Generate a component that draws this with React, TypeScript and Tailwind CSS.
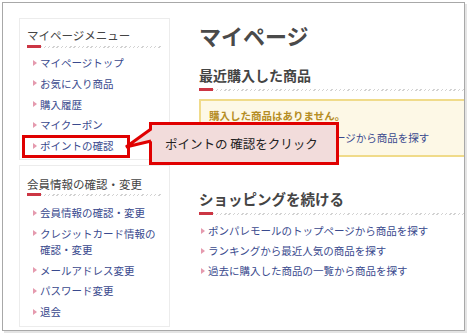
import React from 'react';

const menu1 = ['マイページトップ', 'お気に入り商品', '購入履歴', 'マイクーポン', 'ポイントの確認'];

function Tri() {
  return (
    <span className="mt-[4.5px] mr-[3px] h-0 w-0 shrink-0 border-y-[3.5px] border-l-[4px] border-y-transparent border-l-[#e59aae]" />
  );
}

function Underline() {
  return (
    <div className="flex h-[3px] items-center">
      <div className="h-[3px] w-[14px] shrink-0 bg-[#cc3644]" />
      <div className="h-[2px] flex-1 bg-[repeating-linear-gradient(135deg,#d2d2d2_0px,#d2d2d2_1px,transparent_1px,transparent_3px)]" />
    </div>
  );
}

function SideItem({ children }: { children: React.ReactNode }) {
  return (
    <li className="flex items-start pl-[6px] text-[10.5px] leading-[16px] text-[#3a4a8e]">
      <Tri />
      <span>{children}</span>
    </li>
  );
}

function MainItem({ children }: { children: React.ReactNode }) {
  return (
    <li className="flex items-start pl-[2px] text-[10.5px] leading-[16px] text-[#3a4a8e]">
      <Tri />
      <span>{children}</span>
    </li>
  );
}

export default function App() {
  return (
    <div className="relative h-[334px] w-[468px] overflow-hidden bg-white font-['Noto_Sans_CJK_JP',sans-serif]">
      <div className="pl-[2px] pt-[2px]">
        <div className="relative h-[329px] w-[463px] overflow-hidden border border-[#a8a8a8] shadow-[2px_2px_0_#e4e4e4]">
          <div className="flex pl-[16px] pt-[15px]">
            {/* Sidebar */}
            <div className="w-[151px] shrink-0">
              <div className="border border-[#ececec] px-[7px] pb-[5px] pt-[8px]">
                <div className="text-[11.5px] leading-[16px] text-[#444]">マイページメニュー</div>
                <div className="mt-[2px]">
                  <Underline />
                </div>
                <ul className="mt-[7px] flex flex-col gap-[4.75px]">
                  {menu1.map((m) => (
                    <SideItem key={m}>{m}</SideItem>
                  ))}
                </ul>
              </div>
              <div className="mt-[5px] border border-[#ececec] px-[7px] pb-[6px] pt-[10px]">
                <div className="text-[11.5px] leading-[16px] text-[#444]">会員情報の確認・変更</div>
                <div className="mt-[1px]">
                  <Underline />
                </div>
                <ul className="mt-[9px] flex flex-col gap-[4.75px]">
                  <SideItem>会員情報の確認・変更</SideItem>
                  <SideItem>
                    クレジットカード情報の
                    <br />
                    確認・変更
                  </SideItem>
                  <SideItem>メールアドレス変更</SideItem>
                  <SideItem>パスワード変更</SideItem>
                  <SideItem>退会</SideItem>
                </ul>
              </div>
            </div>

            {/* Main */}
            <div className="ml-[29px] w-[320px] shrink-0 pt-[3px]">
              <h1 className="text-[22px] font-bold leading-[28px] text-[#4a4a4a]">マイページ</h1>
              <h2 className="mt-[16px] text-[14px] font-bold leading-[20px] text-[#444]">最近購入した商品</h2>
              <div className="mt-[3px]">
                <Underline />
              </div>
              <div className="mt-[8px] border-2 border-[#f0db8a] bg-[#fdf8e6] pb-[9px] pl-[8px] pt-[7px]">
                <div className="text-[10.5px] font-bold leading-[16px] text-[#b58d24]">購入した商品はありません。</div>
                <div className="mt-[6px] flex items-start text-[10.5px] leading-[16px] text-[#3a4a8e]">
                  <span>ポンパレモールのトップページから商品を探す</span>
                </div>
              </div>
              <h2 className="mt-[32px] text-[14.5px] font-bold leading-[20px] text-[#444]">ショッピングを続ける</h2>
              <div className="mt-[3px]">
                <Underline />
              </div>
              <ul className="mt-[8px] flex flex-col gap-[4px]">
                <MainItem>ポンパレモールのトップページから商品を探す</MainItem>
                <MainItem>ランキングから最近人気の商品を探す</MainItem>
                <MainItem>過去に購入した商品の一覧から商品を探す</MainItem>
              </ul>
            </div>
          </div>
        </div>
      </div>

      {/* Highlight rectangle */}
      <div className="absolute left-[22px] top-[135px] h-[23px] w-[108px] border-[3px] border-[#e00000]" />

      {/* Callout */}
      <div className="absolute left-[149px] top-[122px] flex h-[43px] w-[190px] items-center border-[3px] border-[#e00000] bg-[#f2dcdb] pl-[13px]">
        <span className="text-[12.5px] leading-[16px] text-[#222]">ポイントの 確認をクリック</span>
      </div>
      <svg className="absolute left-0 top-0" width="468" height="334" viewBox="0 0 468 334">
        <polygon points="153,129 126,147 153,141" fill="#f2dcdb" />
        <polyline points="151,129 126,147 151,141" fill="none" stroke="#e00000" strokeWidth="3" strokeLinejoin="miter" />
      </svg>
    </div>
  );
}
